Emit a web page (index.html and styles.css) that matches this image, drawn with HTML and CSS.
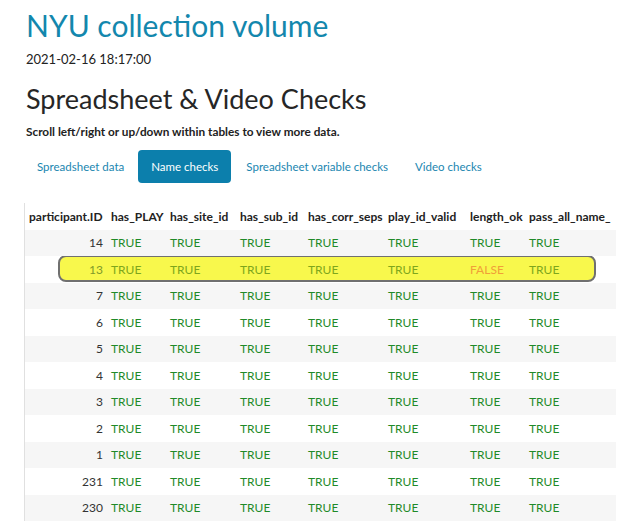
FILE: index.html
```html
<!DOCTYPE html>
<html lang="en">
<head>
<meta charset="utf-8">
<title>NYU collection volume</title>
<link rel="stylesheet" href="styles.css">
</head>
<body>
<div class="page">
  <h1 class="title">NYU collection volume</h1>
  <div class="date">2021-02-16 18:17:00</div>
  <h2 class="section">Spreadsheet &amp; Video Checks</h2>
  <p class="note">Scroll left/right or up/down within tables to view more data.</p>
  <nav class="tabs">
    <span class="tab">Spreadsheet data</span>
    <span class="tab active">Name checks</span>
    <span class="tab">Spreadsheet variable checks</span>
    <span class="tab">Video checks</span>
  </nav>
  <div class="table-wrap">
    <div class="highlight"></div>
    <table class="grid">
      <colgroup>
        <col class="c1"><col class="c2"><col class="c3"><col class="c4"><col class="c5"><col class="c6"><col class="c7"><col class="c8">
      </colgroup>
      <thead>
        <tr><th class="id">participant.ID</th><th>has_PLAY</th><th>has_site_id</th><th>has_sub_id</th><th>has_corr_seps</th><th>play_id_valid</th><th>length_ok</th><th>pass_all_name_</th></tr>
      </thead>
      <tbody>
        <tr><td class="id">14</td><td>TRUE</td><td>TRUE</td><td>TRUE</td><td>TRUE</td><td>TRUE</td><td>TRUE</td><td>TRUE</td></tr>
        <tr class="marked"><td class="id">13</td><td>TRUE</td><td>TRUE</td><td>TRUE</td><td>TRUE</td><td>TRUE</td><td class="false">FALSE</td><td>TRUE</td></tr>
        <tr><td class="id">7</td><td>TRUE</td><td>TRUE</td><td>TRUE</td><td>TRUE</td><td>TRUE</td><td>TRUE</td><td>TRUE</td></tr>
        <tr><td class="id">6</td><td>TRUE</td><td>TRUE</td><td>TRUE</td><td>TRUE</td><td>TRUE</td><td>TRUE</td><td>TRUE</td></tr>
        <tr><td class="id">5</td><td>TRUE</td><td>TRUE</td><td>TRUE</td><td>TRUE</td><td>TRUE</td><td>TRUE</td><td>TRUE</td></tr>
        <tr><td class="id">4</td><td>TRUE</td><td>TRUE</td><td>TRUE</td><td>TRUE</td><td>TRUE</td><td>TRUE</td><td>TRUE</td></tr>
        <tr><td class="id">3</td><td>TRUE</td><td>TRUE</td><td>TRUE</td><td>TRUE</td><td>TRUE</td><td>TRUE</td><td>TRUE</td></tr>
        <tr><td class="id">2</td><td>TRUE</td><td>TRUE</td><td>TRUE</td><td>TRUE</td><td>TRUE</td><td>TRUE</td><td>TRUE</td></tr>
        <tr><td class="id">1</td><td>TRUE</td><td>TRUE</td><td>TRUE</td><td>TRUE</td><td>TRUE</td><td>TRUE</td><td>TRUE</td></tr>
        <tr><td class="id">231</td><td>TRUE</td><td>TRUE</td><td>TRUE</td><td>TRUE</td><td>TRUE</td><td>TRUE</td><td>TRUE</td></tr>
        <tr><td class="id">230</td><td>TRUE</td><td>TRUE</td><td>TRUE</td><td>TRUE</td><td>TRUE</td><td>TRUE</td><td>TRUE</td></tr>
      </tbody>
    </table>
  </div>
</div>
</body>
</html>
```

FILE: styles.css
```css
html, body {
  margin: 0;
  padding: 0;
  background: #ffffff;
}

body {
  font-family: Lato, "Open Sans", "Liberation Sans", sans-serif;
  color: #222222;
}

.page {
  padding: 0 0 0 26px;
  height: 525px;
  overflow: hidden;
}

.title {
  margin: 0;
  padding-top: 8px;
  font-size: 30px;
  line-height: 34px;
  font-weight: 400;
  color: #1387ad;
}

.date {
  margin-top: 8px;
  font-size: 13px;
  line-height: 18px;
  color: #222222;
}

.section {
  margin: 14px 0 0 0;
  font-size: 27px;
  line-height: 34px;
  font-weight: 400;
  color: #262626;
}

.note {
  margin: 9px 0 0 0;
  font-size: 11.8px;
  line-height: 14px;
  font-weight: 700;
  color: #222222;
}

.tabs {
  display: flex;
  align-items: center;
  margin-top: 11px;
}

.tab {
  display: block;
  padding: 0 12px;
  height: 33px;
  line-height: 33px;
  font-size: 11.5px;
  color: #1a86b0;
  border-radius: 4px;
}

.tab:first-child {
  padding-left: 11px;
  padding-right: 13px;
}

.tab.active {
  background: #0c7fac;
  color: #ffffff;
  padding: 0 13px;
  margin: 0 1px;
}

.tab:nth-child(3) {
  padding-left: 14px;
  padding-right: 13px;
}

.tab:nth-child(4) {
  padding-left: 14px;
}

.table-wrap {
  position: relative;
  margin: 20px 0 0 -2px;
  width: 591px;
  border-left: 1px solid #e0e0e0;
}

.grid {
  position: relative;
  z-index: 1;
  table-layout: fixed;
  border-collapse: collapse;
  width: 591px;
  font-size: 12px;
}

.c1 { width: 82px; }
.c2 { width: 59px; }
.c3 { width: 70px; }
.c4 { width: 68px; }
.c5 { width: 80px; }
.c6 { width: 82px; }
.c7 { width: 59px; }
.c8 { width: 91px; }

.grid th,
.grid td {
  padding: 0 4px;
  height: 26.5px;
  white-space: nowrap;
  text-align: left;
}

.grid th {
  font-weight: 700;
  color: #222222;
}

.grid td {
  color: #1f8a28;
}

.grid td.id {
  text-align: right;
  color: #333333;
}

.grid tbody tr:nth-child(odd) {
  background: #f6f6f6;
}

.grid tr.marked td {
  color: #7ea61c;
}

.grid tr.marked td.id {
  color: #7f9a2a;
}

.grid tr.marked td.false {
  color: #f0a038;
}

.highlight {
  position: absolute;
  z-index: 0;
  left: 33px;
  top: 52px;
  width: 534px;
  height: 23px;
  border: 2px solid #707070;
  border-radius: 8px;
  background: #f8f84c;
}
```
